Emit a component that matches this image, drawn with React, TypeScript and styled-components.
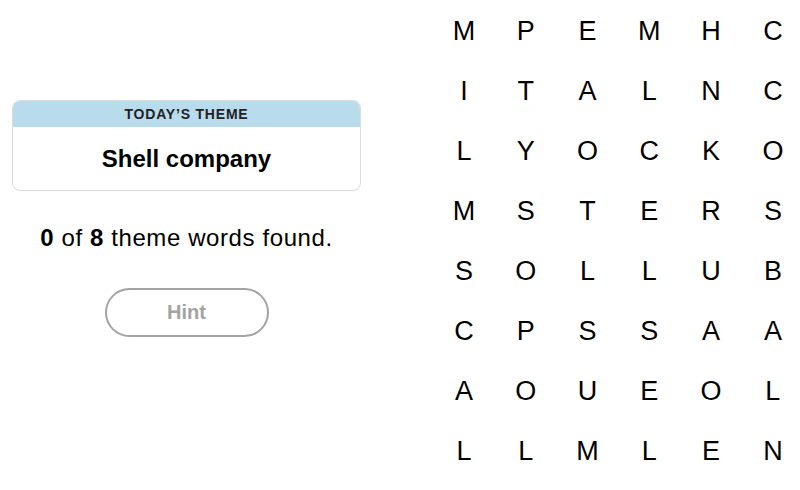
import React from "react";
import styled, { createGlobalStyle } from "styled-components";

const GlobalStyle = createGlobalStyle`
  html, body {
    margin: 0;
    padding: 0;
    background: #ffffff;
    overflow: hidden;
    font-family: "Liberation Sans", Arial, sans-serif;
    color: #000;
  }
`;

const letters = [
  "MPEMHC",
  "ITALNC",
  "LYOCKO",
  "MSTERS",
  "SOLLUB",
  "CPSSAA",
  "AOUEOL",
  "LLMLEN",
];

const Page = styled.div`
  display: flex;
  width: 800px;
  height: 490px;
`;

const Side = styled.section`
  width: 373px;
  flex: none;
  display: flex;
  flex-direction: column;
  align-items: center;
  padding: 100px 0 0 12px;
  box-sizing: border-box;
`;

const ThemeCard = styled.div`
  width: 349px;
  border: 1px solid #dcdcdc;
  border-radius: 8px;
  overflow: hidden;
  box-sizing: border-box;
  align-self: flex-start;
`;

const ThemeHeader = styled.div`
  height: 26px;
  background: #b9dcec;
  display: flex;
  align-items: center;
  justify-content: center;
  font-size: 14px;
  font-weight: 700;
  letter-spacing: 0.8px;
  color: #222;
`;

const ThemeBody = styled.div`
  height: 63px;
  display: flex;
  align-items: center;
  justify-content: center;
  font-size: 24px;
  font-weight: 700;
  color: #000;
`;

const Found = styled.p`
  margin: 33px 0 0 -12px;
  font-size: 24px;
  line-height: 28px;
  letter-spacing: 0.6px;
  b {
    font-weight: 700;
  }
`;

const HintButton = styled.button`
  margin: 36px 0 0 -12px;
  width: 164px;
  height: 49px;
  border: 2px solid #a3a3a3;
  border-radius: 25px;
  background: #fff;
  color: #a3a3a3;
  font-family: inherit;
  font-size: 20px;
  font-weight: 700;
  box-sizing: border-box;
`;

const Board = styled.div`
  margin: 1px 0 0 60px;
  display: grid;
  grid-template-columns: repeat(6, 61.8px);
  grid-auto-rows: 60px;
  flex: none;
`;

const Cell = styled.span`
  display: flex;
  align-items: center;
  justify-content: center;
  font-size: 27px;
  color: #000;
`;

export default function App() {
  return (
    <>
      <GlobalStyle />
      <Page>
        <Side>
          <ThemeCard>
            <ThemeHeader>TODAY’S THEME</ThemeHeader>
            <ThemeBody>Shell company</ThemeBody>
          </ThemeCard>
          <Found>
            <b>0</b> of <b>8</b> theme words found.
          </Found>
          <HintButton>Hint</HintButton>
        </Side>
        <Board>
          {letters.map((row, r) =>
            row.split("").map((ch, c) => <Cell key={`${r}-${c}`}>{ch}</Cell>)
          )}
        </Board>
      </Page>
    </>
  );
}
